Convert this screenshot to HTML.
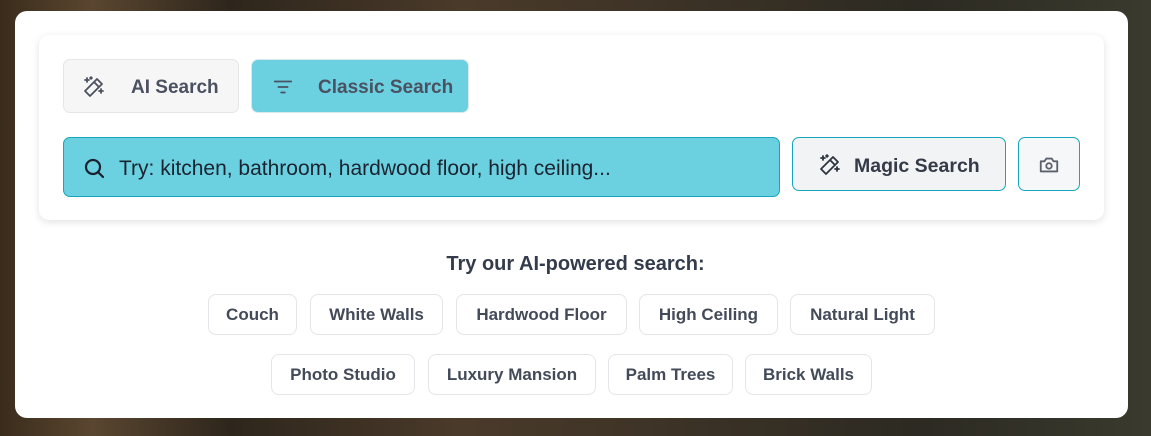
<!DOCTYPE html>
<html><head><style>
*{margin:0;padding:0;box-sizing:border-box}
body{width:1151px;height:436px;overflow:hidden;position:relative;font-family:"Liberation Sans",sans-serif;
background:linear-gradient(90deg,#3a2c1c 0%,#5a4630 8%,#2e261c 20%,#4a3a2a 40%,#3b3226 60%,#2c2a22 80%,#3a3a2e 100%);}
.a{position:absolute}
.outer{left:15px;top:11px;width:1113px;height:407px;background:#fff;border-radius:12px}
.inner{left:39px;top:35px;width:1065px;height:185px;background:#fff;border-radius:10px;box-shadow:0 2px 8px rgba(0,0,0,.12)}
.btn{display:flex;align-items:center;border-radius:7px;font-size:19px;font-weight:bold;color:#4b5160}
.chip{height:41px;border:1px solid #e3e5e8;border-radius:8px;display:flex;align-items:center;justify-content:center;font-size:17px;font-weight:bold;color:#434a58;background:#fff}
svg{fill:none;stroke-linecap:round;stroke-linejoin:round}
</style></head><body>
<div class="a outer"></div>
<div class="a inner"></div>
<div class="a btn" style="left:63px;top:59px;width:176px;height:54px;background:#f6f6f6;border:1px solid #e6e6e6">
<svg class="a" style="left:18px;top:15px" width="24" height="24" viewBox="0 0 24 24" stroke="#4b5160" stroke-width="1.8"><path d="M15 4l5 5L8 21l-5-5z M12 7l5 5"/><path d="M5 3v4M3 5h4M19 14v4M17 16h4M9 2v2M8 3h2"/></svg>
<span class="a" style="left:67px;top:17px">AI Search</span></div>
<div class="a btn" style="left:251px;top:59px;width:218px;height:54px;background:#6bd0e0;border:1px solid #d8e8ec">
<svg class="a" style="left:20px;top:16px" width="22" height="22" viewBox="0 0 24 24" stroke="#4b5160" stroke-width="2"><path d="M3 6h18M7 12h10M10 18h4"/></svg>
<span class="a" style="left:66px;top:17px">Classic Search</span></div>
<div class="a" style="left:63px;top:137px;width:717px;height:60px;background:#6bd0e0;border:1px solid #16a6bd;border-radius:7px">
<svg class="a" style="left:18px;top:18px" width="24" height="24" viewBox="0 0 24 24" stroke="#1a2230" stroke-width="2.2"><circle cx="11" cy="11" r="7"/><path d="M16 16l5 5"/></svg>
<span class="a" style="left:55px;top:19px;font-size:21px;color:#1b2330">Try: kitchen, bathroom, hardwood floor, high ceiling...</span></div>
<div class="a btn" style="left:792px;top:137px;width:214px;height:54px;background:#f2f3f5;border:1px solid #16a6bd">
<svg class="a" style="left:25px;top:15px" width="24" height="24" viewBox="0 0 24 24" stroke="#2e3440" stroke-width="1.8"><path d="M15 4l5 5L8 21l-5-5z M12 7l5 5"/><path d="M5 3v4M3 5h4M19 14v4M17 16h4M9 2v2M8 3h2"/></svg>
<span class="a" style="left:61px;top:17px;color:#343a48;font-size:19.5px">Magic Search</span></div>
<div class="a" style="left:1018px;top:137px;width:62px;height:54px;background:#f6f7f8;border:1px solid #16a6bd;border-radius:7px">
<svg class="a" style="left:19px;top:16px" width="22" height="22" viewBox="0 0 24 24" stroke="#5b616d" stroke-width="2"><path d="M3 8h4l2-3h6l2 3h4v11H3z"/><circle cx="12" cy="13" r="3"/></svg></div>
<div class="a" style="left:0;width:1151px;top:253px;text-align:center;font-size:20px;font-weight:bold;color:#343c4c">Try our AI-powered search:</div>
<div class="a chip" style="left:208px;top:294px;width:89px">Couch</div>
<div class="a chip" style="left:310px;top:294px;width:133px">White Walls</div>
<div class="a chip" style="left:456px;top:294px;width:171px">Hardwood Floor</div>
<div class="a chip" style="left:639px;top:294px;width:139px">High Ceiling</div>
<div class="a chip" style="left:790px;top:294px;width:145px">Natural Light</div>
<div class="a chip" style="left:271px;top:354px;width:144px">Photo Studio</div>
<div class="a chip" style="left:428px;top:354px;width:168px">Luxury Mansion</div>
<div class="a chip" style="left:608px;top:354px;width:125px">Palm Trees</div>
<div class="a chip" style="left:745px;top:354px;width:127px">Brick Walls</div>
</body></html>
